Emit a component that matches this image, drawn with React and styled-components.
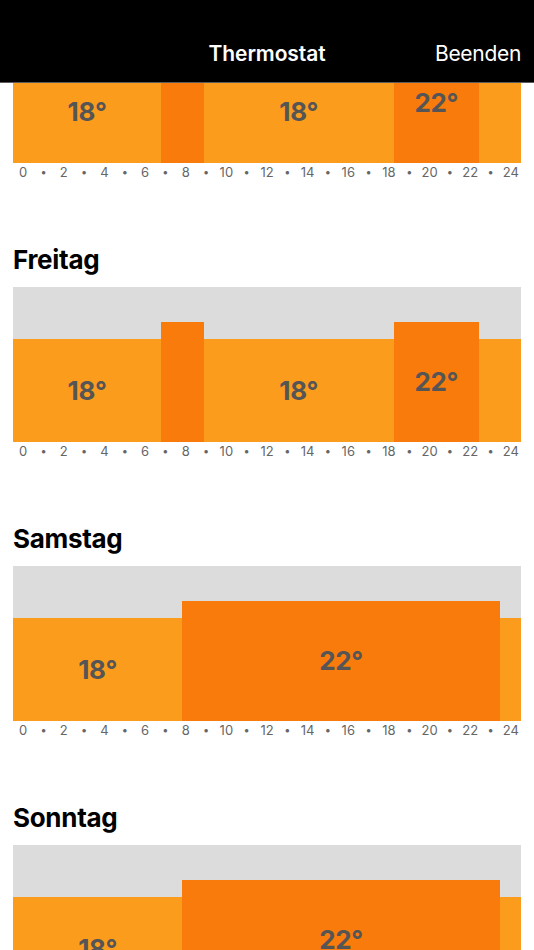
import React from "react";
import styled, { createGlobalStyle } from "styled-components";

const GlobalStyle = createGlobalStyle`
  html, body {
    margin: 0;
    padding: 0;
    background: #ffffff;
    font-family: Inter, "Noto Sans", "Liberation Sans", sans-serif;
    -webkit-font-smoothing: antialiased;
  }
  * { box-sizing: border-box; }
`;

const Page = styled.div`
  width: 534px;
  height: 950px;
  display: flex;
  flex-direction: column;
  overflow: hidden;
  background: #ffffff;
`;

const NavBar = styled.header`
  flex: 0 0 83px;
  height: 83px;
  background: #000000;
  border-bottom: 1px solid #5c5c5c;
  display: grid;
  grid-template-columns: 1fr auto 1fr;
  align-items: start;
  padding: 42px 13px 0 13px;
`;

const NavTitle = styled.h1`
  grid-column: 2;
  margin: 0;
  color: #ffffff;
  font-size: 21px;
  line-height: 24px;
  font-weight: 600;
  letter-spacing: -0.1px;
`;

const NavButton = styled.button`
  grid-column: 3;
  justify-self: end;
  margin: 0;
  padding: 0;
  border: none;
  background: none;
  color: #ffffff;
  font-family: inherit;
  font-size: 21px;
  line-height: 24px;
  font-weight: 400;
  letter-spacing: -0.3px;
`;

const Viewport = styled.main`
  flex: 1 1 auto;
  overflow: hidden;
`;

const DayList = styled.div`
  margin-top: ${(p) => -p.$scroll}px;
  padding: 0 13px;
  display: flex;
  flex-direction: column;
  gap: 63px;
`;

const DaySection = styled.section`
  display: flex;
  flex-direction: column;
`;

const DayTitle = styled.h2`
  margin: 0 0 11px 0;
  font-size: 26px;
  line-height: 32px;
  font-weight: 700;
  color: #000000;
  letter-spacing: -0.3px;
`;

const Chart = styled.div`
  height: 155px;
  background: #dcdcdc;
  display: flex;
  align-items: flex-end;
`;

const Segment = styled.div`
  flex: ${(p) => p.$hours} 0 0;
  height: ${(p) => p.$height}px;
  background: ${(p) => (p.$high ? "#f97b0b" : "#fc9c1d")};
  display: flex;
  align-items: center;
  justify-content: center;
  min-width: 0;
`;

const TempLabel = styled.span`
  font-size: 26px;
  line-height: 32px;
  font-weight: 700;
  color: #555555;
  letter-spacing: -0.3px;
`;

const Axis = styled.div`
  display: grid;
  grid-template-columns: repeat(25, 1fr);
  height: 18px;
`;

const Tick = styled.span`
  text-align: center;
  font-size: ${(p) => (p.$dot ? "11px" : "13px")};
  line-height: 18px;
  color: #666666;
  white-space: nowrap;
`;

const LOW = 103;
const HIGH = 120;

const weekday = [
  { from: 0, to: 7, t: 18 },
  { from: 7, to: 9, t: 22 },
  { from: 9, to: 18, t: 18 },
  { from: 18, to: 22, t: 22 },
  { from: 22, to: 24, t: 18 },
];

const weekend = [
  { from: 0, to: 8, t: 18 },
  { from: 8, to: 23, t: 22 },
  { from: 23, to: 24, t: 18 },
];

const days = [
  { name: "Donnerstag", plan: weekday },
  { name: "Freitag", plan: weekday },
  { name: "Samstag", plan: weekend },
  { name: "Sonntag", plan: weekend },
];

const hours = Array.from({ length: 25 }, (_, i) => i);

function DayChart({ plan }) {
  return (
    <Chart>
      {plan.map((s, i) => {
        const dur = s.to - s.from;
        const high = s.t >= 22;
        return (
          <Segment key={i} $hours={dur} $high={high} $height={high ? HIGH : LOW}>
            {dur >= 3 && <TempLabel>{s.t}°</TempLabel>}
          </Segment>
        );
      })}
    </Chart>
  );
}

export default function App() {
  return (
    <>
      <GlobalStyle />
      <Page>
        <NavBar>
          <NavTitle>Thermostat</NavTitle>
          <NavButton>Beenden</NavButton>
        </NavBar>
        <Viewport>
          <DayList $scroll={118}>
            {days.map((d) => (
              <DaySection key={d.name}>
                <DayTitle>{d.name}</DayTitle>
                <DayChart plan={d.plan} />
                <Axis>
                  {hours.map((h) =>
                    h % 2 === 0 ? (
                      <Tick key={h}>{h}</Tick>
                    ) : (
                      <Tick key={h} $dot>
                        •
                      </Tick>
                    )
                  )}
                </Axis>
              </DaySection>
            ))}
          </DayList>
        </Viewport>
      </Page>
    </>
  );
}
